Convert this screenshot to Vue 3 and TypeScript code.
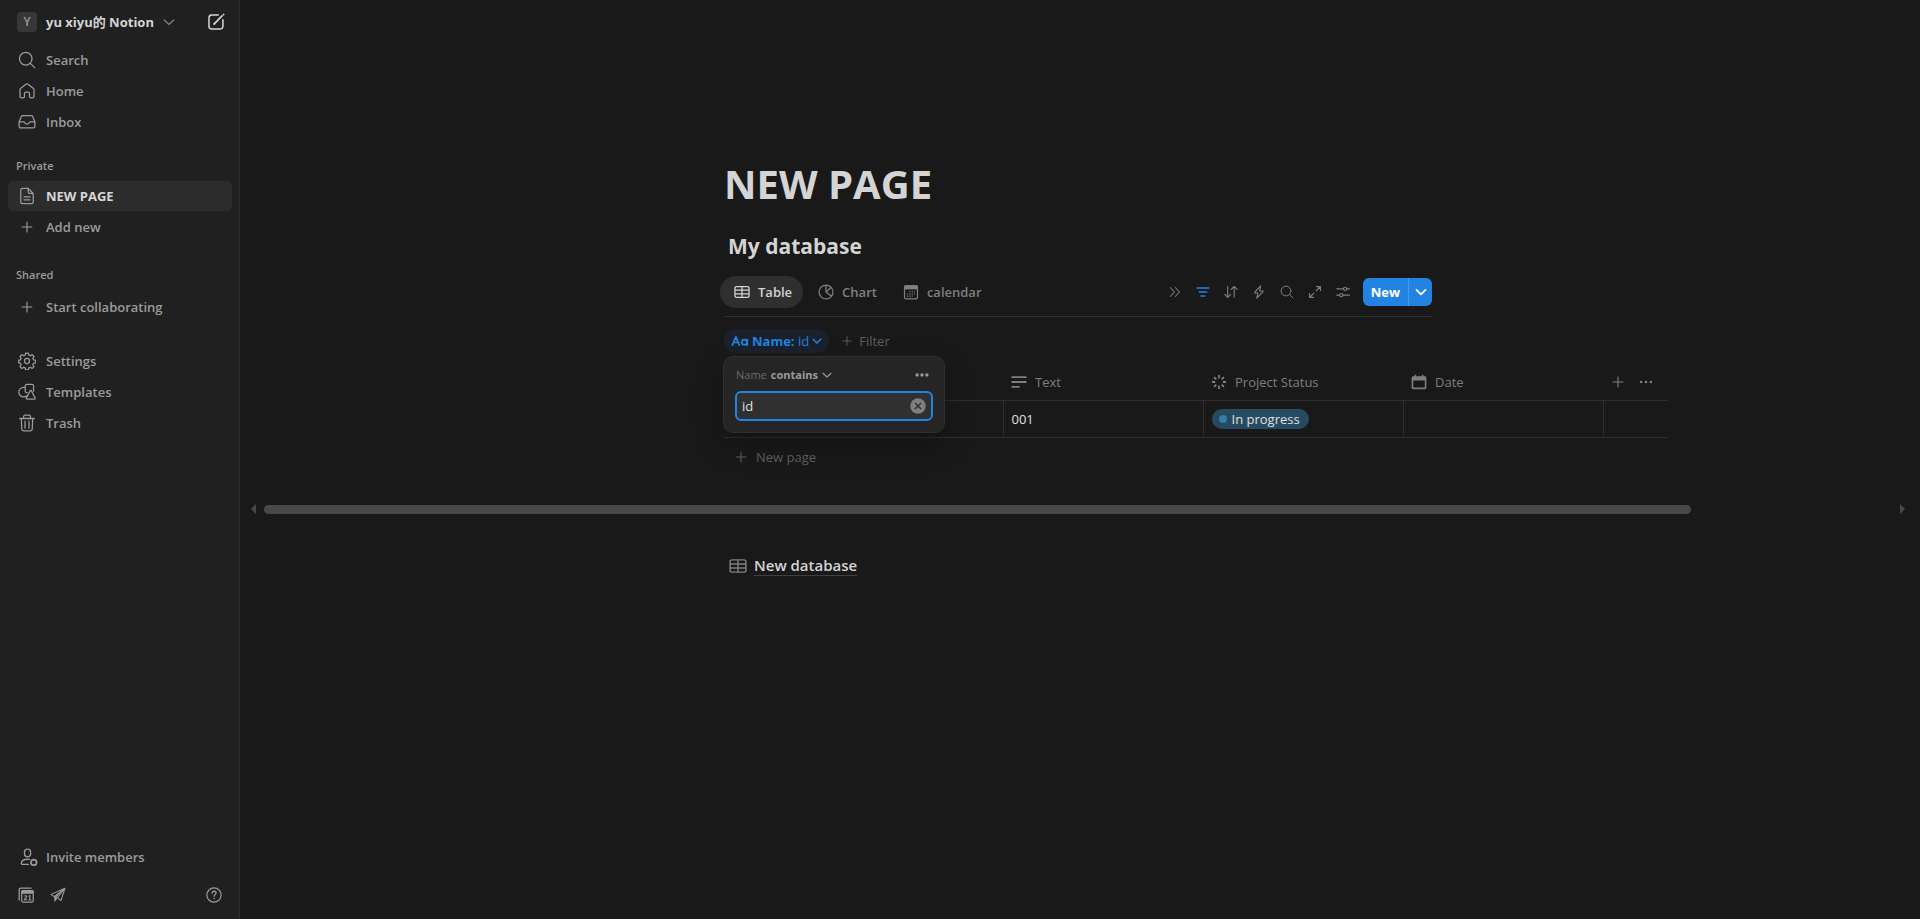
<script setup lang="ts">
import { ref } from 'vue'

interface NavItem {
  label: string
  icon: string
  active?: boolean
  muted?: boolean
}

const mainNav: NavItem[] = [
  { label: 'Search', icon: 'search' },
  { label: 'Home', icon: 'home' },
  { label: 'Inbox', icon: 'inbox' },
]
const privateNav: NavItem[] = [
  { label: 'NEW PAGE', icon: 'page', active: true },
  { label: 'Add new', icon: 'plus', muted: true },
]
const sharedNav: NavItem[] = [{ label: 'Start collaborating', icon: 'plus', muted: true }]
const systemNav: NavItem[] = [
  { label: 'Settings', icon: 'gear' },
  { label: 'Templates', icon: 'templates' },
  { label: 'Trash', icon: 'trash' },
]
const navGroups: { title: string; items: NavItem[] }[] = [
  { title: '', items: mainNav },
  { title: 'Private', items: privateNav },
  { title: 'Shared', items: sharedNav },
  { title: '', items: systemNav },
]

const views = [
  { label: 'Table', icon: 'table' },
  { label: 'Chart', icon: 'chart' },
  { label: 'calendar', icon: 'calendar-grid' },
]
const currentView = ref('Table')

const tools = [
  { label: 'Show more', icon: 'chevrons' },
  { label: 'Filter', icon: 'filter' },
  { label: 'Sort', icon: 'sort' },
  { label: 'Automations', icon: 'bolt' },
  { label: 'Search', icon: 'search' },
  { label: 'Open as full page', icon: 'expand' },
  { label: 'View settings', icon: 'sliders' },
]
const filterText = ref('id')
</script>

<template>
  <svg class="sprite" aria-hidden="true">
    <symbol id="search" viewBox="0 0 20 20"><g fill="none" stroke="currentColor" stroke-width="1.4" stroke-linecap="round"><circle cx="8.6" cy="8.6" r="7" /><path d="M13.7 13.7 18.5 18.5" /></g></symbol>
    <symbol id="home" viewBox="0 0 20 20"><path fill="none" stroke="currentColor" stroke-width="1.4" stroke-linejoin="round" d="M9.2 2.3a1.3 1.3 0 0 1 1.6 0l6.4 5c.4.3.6.7.6 1.2v7.3c0 1-.8 1.8-1.8 1.8h-1.6c-.9 0-1.6-.7-1.6-1.6v-3.2c0-.9-.7-1.6-1.6-1.6H8.8c-.9 0-1.6.7-1.6 1.6V16c0 .9-.7 1.6-1.6 1.6H4c-1 0-1.8-.8-1.8-1.8V8.500c0-.5.2-.9.6-1.200z" /></symbol>
    <symbol id="inbox" viewBox="0 0 20 20"><path fill="none" stroke="currentColor" stroke-width="1.4" stroke-linejoin="round" d="M1.2 9.8 3.6 4.2c.3-.7.9-1.2 1.7-1.2h9.400c.8 0 1.400.5 1.700 1.200l2.400 5.600v5c0 1-.8 1.800-1.800 1.800H3c-1 0-1.800-.8-1.800-1.800zH6.300c.6 0 1 .4 1.200.9a2.700 2.700 0 0 0 5 0c.2-.5.600-.9 1.200-.9h5.100" /></symbol>
    <symbol id="page" viewBox="0 0 20 20"><g fill="none" stroke="currentColor" stroke-width="1.4" stroke-linecap="round" stroke-linejoin="round"><path d="M11.400 1.600H5.200c-1.200 0-2.100.9-2.100 2.100v12.600c0 1.200.9 2.100 2.100 2.100h9.600c1.200 0 2.100-.9 2.100-2.100V7.100zV5.500c0 .9.700 1.600 1.600 1.600h3.900M6.700 11h6.600M6.700 14.200h6.600" /></g></symbol>
    <symbol id="plus" viewBox="0 0 20 20"><path stroke="currentColor" stroke-width="1.6" stroke-linecap="round" d="M10 3v14M3 10h14" /></symbol>
    <symbol id="gear" viewBox="0 0 20 20"><g fill="none" stroke="currentColor" stroke-width="1.400" stroke-linejoin="round"><circle cx="10" cy="10" r="2.800" /><path d="M8.500 1.200h3l.5 2.300 1.700.7 2-1.300 2.100 2.100-1.300 2 .7 1.700 2.300.4v2.900l-2.300.5-.7 1.700 1.300 2-2.100 2.100-2-1.300-1.700.7-.5 2.300h-3L8 17.700l-1.700-.7-2 1.300-2.100-2.100 1.300-2-.7-1.700L.8 12V9.100l2-.4.7-1.700-1.300-2 2.100-2.100 2 1.300L8 3.500z" /></g></symbol>
    <symbol id="templates" viewBox="0 0 20 20"><g fill="none" stroke="currentColor" stroke-width="1.400" stroke-linejoin="round"><path d="M7.600 5a5.300 5.300 0 1 0 2 9.200M8 9.500V3.200c0-.9.700-1.600 1.600-1.600h6.100c.9 0 1.600.7 1.600 1.600v6.500M8 9.200c0 1 .5 1.500 1.600 1.500h1.100M13.400 8.800c.4-.7 1.200-.7 1.600 0l4 7.700c.4.700 0 1.500-.8 1.500h-8c-.8 0-1.200-.8-.8-1.500z" /></g></symbol>
    <symbol id="trash" viewBox="0 0 20 20"><path fill="none" stroke="currentColor" stroke-width="1.400" stroke-linecap="round" stroke-linejoin="round" d="M1.900 5h16.200M6.200 4.800V3c0-1 .7-1.700 1.700-1.700h4.200c1 0 1.700.7 1.700 1.700v1.800M3.700 5.200l.5 11.600c0 1.100.8 1.900 1.900 1.900h7.800c1.100 0 1.900-.8 1.900-1.900l.5-11.600M7.800 8v7.700M12.200 8v7.700" /></symbol>
    <symbol id="compose" viewBox="0 0 20 20"><g fill="none" stroke="currentColor" stroke-linecap="round"><path stroke-width="1.700" d="M12.500 2.300H5.200a3 3 0 0 0-3 3v9.500a3 3 0 0 0 3 3h9.500a3 3 0 0 0 3-3V7.500" /><path stroke-width="1.900" d="m8.300 11.700 8.400-8.400M18.300 1.700l.2-.2" /></g><path fill="currentColor" d="m6.800 13.400.8-2.700 2 1.900z" /></symbol>
    <symbol id="down" viewBox="0 0 20 20"><path fill="none" stroke="currentColor" stroke-width="2.200" stroke-linecap="round" stroke-linejoin="round" d="m2 6.500 8 7.500 8-7.500" /></symbol>
    <symbol id="down-bold" viewBox="0 0 20 20"><path fill="none" stroke="currentColor" stroke-width="3" stroke-linecap="round" stroke-linejoin="round" d="m2.500 6.500 7.500 7.500 7.500-7.500" /></symbol>
    <symbol id="member" viewBox="0 0 20 20"><g fill="none" stroke="currentColor" stroke-width="1.500"><rect x="5" y="1.300" width="6.800" height="8.500" rx="3.400" /><path stroke-linecap="round" d="M9.500 18.200H2.600c-.8 0-1.300-.6-1.200-1.400.5-2.600 3.200-4.300 7-4.300.8 0 1.500 0 2.200.2" /><circle cx="15.300" cy="16" r="3.100" stroke-width="1.900" /></g></symbol>
    <symbol id="cal21" viewBox="0 0 20 20"><path fill="none" stroke="currentColor" stroke-width="1.600" d="M1.500 17V3.500c0-1.200.8-2 2-2H17" /><rect x="4.700" y="4.500" width="14.300" height="14.300" rx="1.500" fill="none" stroke="currentColor" stroke-width="1.500" /><path fill="currentColor" d="M4.200 4.200h15v4.300h-15z" /><path fill="none" stroke="currentColor" stroke-width="1.400" d="M8 11.700c.5-1.100 3-1 3 .3 0 1.500-3 2-3 4h3.400M13.200 11.500l1.600-.7V16m-1.800.3h3.600" /></symbol>
    <symbol id="send" viewBox="0 0 20 20"><path fill="none" stroke="currentColor" stroke-width="1.300" stroke-linejoin="round" d="M18.800 1.500 1.200 9.200l4.100 2.900L18.800 1.500 13.700 17l-4.300-3.600z" /><path fill="currentColor" d="m5 12 .8 6.600 3.600-4.400-1.200-1.400L15 5.200z" /></symbol>
    <symbol id="help" viewBox="0 0 20 20"><circle cx="10" cy="10" r="8.900" fill="none" stroke="currentColor" stroke-width="1.500" /><path fill="none" stroke="currentColor" stroke-width="1.600" stroke-linecap="round" d="M7.500 7.600c.2-1.500 1.200-2.300 2.600-2.300s2.500.9 2.500 2.200c0 2-2.500 2.100-2.500 4.200" /><circle cx="10.100" cy="14.300" r="1" fill="currentColor" /></symbol>
    <symbol id="table" viewBox="0 0 20 20"><path fill="none" stroke="currentColor" stroke-width="1.600" d="M3.200 3.200h13.600a2 2 0 0 1 2 2v9.600a2 2 0 0 1-2 2H3.200a2 2 0 0 1-2-2V5.200a2 2 0 0 1 2-2zM1.200 7.700h17.600M1.200 12.300h17.600M10 3v14" /></symbol>
    <symbol id="chart" viewBox="0 0 20 20"><g fill="none" stroke="currentColor" stroke-width="1.600" stroke-linejoin="round"><circle cx="10" cy="10" r="8.700" /><path d="M10 1.300V10l6.500 5M10 10l6.600-6" /></g></symbol>
    <symbol id="calendar-grid" viewBox="0 0 20 20"><rect x="1.900" y="2" width="16.200" height="16.500" rx="2" fill="none" stroke="currentColor" stroke-width="1.500" /><path fill="currentColor" d="M1.900 2h16.200v4.800H1.900z" /><path stroke="currentColor" stroke-width="1.500" stroke-dasharray="1.500 1.400" d="M8 9.700h7M5 12.500h10M5 15.200h7" /></symbol>
    <symbol id="chevrons" viewBox="0 0 20 20"><path fill="none" stroke="currentColor" stroke-width="1.700" stroke-linecap="round" stroke-linejoin="round" d="m2 2.500 7 7.500-7 7.500M10.500 2.500l7 7.500-7 7.500" /></symbol>
    <symbol id="filter" viewBox="0 0 20 20"><path stroke="currentColor" stroke-width="2" stroke-linecap="round" d="M1.500 4.200h17M4.500 10h11M7.300 15.800h5.400" /></symbol>
    <symbol id="sort" viewBox="0 0 20 20"><path fill="none" stroke="currentColor" stroke-width="1.600" stroke-linecap="round" stroke-linejoin="round" d="M5.300 2.200v15.300M1.200 13.500l4.100 4.200 4.100-4.200M14.500 17.500V2.200M10.400 6.300l4.100-4.200 4.300 4.200" /></symbol>
    <symbol id="bolt" viewBox="0 0 20 20"><path fill="none" stroke="currentColor" stroke-width="1.600" stroke-linejoin="round" d="M12.300 1.200 3.800 10.700c-.3.400-.1.800.4.800h4.300l-1.600 7.300 8.900-9.500c.3-.4.100-.8-.4-.8H11z" /></symbol>
    <symbol id="expand" viewBox="0 0 20 20"><path fill="none" stroke="currentColor" stroke-width="1.700" stroke-linecap="round" stroke-linejoin="round" d="M12.200 2.200h5.600v5.600M17.500 2.500l-6 6M7.800 17.800H2.200v-5.600M2.500 17.500l6-6" /></symbol>
    <symbol id="sliders" viewBox="0 0 20 20"><g fill="none" stroke="currentColor" stroke-width="1.600" stroke-linecap="round"><path d="M1 5.500h9.700M15.500 5.500H19M1 14.500h4.200M10 14.500h9" /><circle cx="13" cy="5.500" r="2.300" /><circle cx="7.500" cy="14.500" r="2.300" /></g></symbol>
    <symbol id="dots" viewBox="0 0 20 20"><g fill="currentColor"><circle cx="3" cy="10" r="2.400" /><circle cx="10" cy="10" r="2.400" /><circle cx="17" cy="10" r="2.400" /></g></symbol>
    <symbol id="dots-thin" viewBox="0 0 20 20"><g fill="currentColor"><circle cx="3" cy="10" r="1.900" /><circle cx="10" cy="10" r="1.900" /><circle cx="17" cy="10" r="1.900" /></g></symbol>
    <symbol id="clear" viewBox="0 0 20 20"><circle cx="10" cy="10" r="9.700" fill="#7f7f7f" /><path stroke="#303030" stroke-width="1.900" d="m6.200 6.200 7.600 7.600M13.800 6.200l-7.600 7.600" /></symbol>
    <symbol id="lines" viewBox="0 0 20 20"><path stroke="currentColor" stroke-width="2.200" stroke-linecap="round" d="M1.500 4h17M1.500 10h17M1.500 16h8.500" /></symbol>
    <symbol id="status" viewBox="0 0 20 20"><path stroke="currentColor" stroke-width="2.200" d="M10 1.200v4M10 14.800v4M1.200 10h4M14.800 10h4M3.800 3.800l2.800 2.800M13.400 13.400l2.800 2.800M3.800 16.200l2.800-2.800M13.400 6.600l2.800-2.800" /></symbol>
    <symbol id="date" viewBox="0 0 20 20"><path fill="currentColor" fill-rule="evenodd" d="M4.500.8h2v2h7v-2h2v2h1.700c1.200 0 2 .8 2 2V17c0 1.200-.8 2-2 2H2.800c-1.200 0-2-.8-2-2V4.800c0-1.200.8-2 2-2h1.700zM2.800 8v9h14.400V8z" /></symbol>
    <symbol id="aa" viewBox="0 0 24 16"><g fill="none" stroke="currentColor" stroke-width="2.300" stroke-linecap="round" stroke-linejoin="round"><path d="m1.800 13.500 4.700-11 4.700 11M3.400 10h6.200" /><circle cx="17.800" cy="9.800" r="3.500" /><path d="M21.700 6v7.500" /></g></symbol>
  </svg>

  <div class="shell">
    <aside class="sidebar">
      <header class="workspace">
        <button class="switcher">
          <span class="avatar">Y</span>
          <span>yu xiyu的 Notion</span>
          <svg class="i12"><use href="#down" /></svg>
        </button>
        <button class="compose" aria-label="New page"><svg class="i18"><use href="#compose" /></svg></button>
      </header>

      <nav class="nav">
        <section v-for="(group, index) in navGroups" :key="index" class="group">
          <h2 v-if="group.title">{{ group.title }}</h2>
          <a v-for="item in group.items" :key="item.label" href="#" class="nav-item" :class="{ active: item.active }">
            <span class="nav-icon"><svg :class="item.muted ? 'i14' : 'i18'"><use :href="'#' + item.icon" /></svg></span>
            {{ item.label }}
          </a>
        </section>
      </nav>

      <footer class="side-footer">
        <a href="#" class="nav-item">
          <span class="nav-icon member"><svg class="i18"><use href="#member" /></svg></span>
          Invite members
        </a>
        <div class="side-tools">
          <button aria-label="Calendar"><svg class="i16"><use href="#cal21" /></svg></button>
          <button aria-label="Mail"><svg class="i16"><use href="#send" /></svg></button>
          <button class="help" aria-label="Help"><svg class="i16"><use href="#help" /></svg></button>
        </div>
      </footer>
    </aside>

    <main class="main">
      <div class="column">
        <h1>NEW PAGE</h1>
        <h2 class="db-title">My database</h2>
        <div class="toolbar">
          <div class="tabs">
            <button
              v-for="view in views"
              :key="view.label"
              class="tab"
              :class="{ current: view.label === currentView }"
              @click="currentView = view.label"
            >
              <svg class="i16"><use :href="'#' + view.icon" /></svg>{{ view.label }}
            </button>
          </div>
          <div class="tools">
            <button v-for="tool in tools" :key="tool.label" class="tool" :class="tool.icon" :aria-label="tool.label">
              <svg><use :href="'#' + tool.icon" /></svg>
            </button>
          </div>
          <div class="new">
            <button class="new-main">New</button>
            <button class="new-more" aria-label="New options"><svg class="i12"><use href="#down-bold" /></svg></button>
          </div>
        </div>

        <div class="filters">
          <div class="filter-anchor">
            <button class="chip">
              <svg class="aa"><use href="#aa" /></svg>
              <span><b>Name:</b> id</span>
              <svg class="i10"><use href="#down-bold" /></svg>
            </button>
            <div class="popover">
              <div class="popover-head">
                <label for="filter-value">Name</label>
                <button class="operator">contains <svg class="i10"><use href="#down" /></svg></button>
                <button class="more" aria-label="Filter options"><svg class="i14"><use href="#dots" /></svg></button>
              </div>
              <div class="field">
                <input id="filter-value" v-model="filterText" type="text" />
                <button aria-label="Clear" @click="filterText = ''"><svg class="i16"><use href="#clear" /></svg></button>
              </div>
            </div>
          </div>
          <button class="add-filter"><svg class="i12"><use href="#plus" /></svg>Filter</button>
        </div>
      </div>

      <div class="bleed">
        <table>
          <colgroup><col class="c-name" /><col class="c" /><col class="c" /><col class="c" /><col class="c-end" /></colgroup>
          <thead>
            <tr>
              <th aria-label="Name"></th>
              <th><span class="th"><svg class="i16"><use href="#lines" /></svg>Text</span></th>
              <th><span class="th"><svg class="i16"><use href="#status" /></svg>Project Status</span></th>
              <th><span class="th"><svg class="i16"><use href="#date" /></svg>Date</span></th>
              <th>
                <span class="th end">
                  <button aria-label="Add property"><svg class="i14"><use href="#plus" /></svg></button>
                  <button aria-label="More"><svg class="i14"><use href="#dots-thin" /></svg></button>
                </span>
              </th>
            </tr>
          </thead>
          <tbody>
            <tr>
              <td></td>
              <td>001</td>
              <td><span class="status">In progress</span></td>
              <td></td>
              <td></td>
            </tr>
          </tbody>
        </table>
        <button class="new-row"><svg class="i14"><use href="#plus" /></svg>New page</button>
      </div>

      <div class="scrollbar" aria-hidden="true">
        <span class="arrow left"></span>
        <span class="track"><span class="thumb"></span></span>
        <span class="arrow right"></span>
      </div>

      <div class="column">
        <a href="#" class="link-db"><svg class="i18"><use href="#table" /></svg><span>New database</span></a>
      </div>
    </main>
  </div>
</template>

<style>
html,
body {
  background: #191919;
}
</style>

<style scoped>
* {
  box-sizing: border-box;
}
.sprite {
  position: absolute;
  width: 0;
  height: 0;
}
.shell {
  display: flex;
  min-height: 100vh;
  background: #191919;
  color: #d4d4d4;
  font: 13px/20px "Segoe UI", "Open Sans", "Noto Sans CJK SC", sans-serif;
}
svg {
  display: block;
  flex: none;
}
.i10 { width: 10px; height: 10px; }
.i12 { width: 12px; height: 12px; }
.i14 { width: 14px; height: 14px; }
.i16 { width: 16px; height: 16px; }
.i18 { width: 18px; height: 18px; }
button {
  display: flex;
  align-items: center;
  justify-content: center;
  padding: 0;
  border: 0;
  background: none;
  color: inherit;
  font: inherit;
  cursor: pointer;
}
a {
  color: inherit;
  text-decoration: none;
}
h1,
h2 {
  margin: 0;
}

.sidebar {
  display: flex;
  flex-direction: column;
  flex: none;
  width: 240px;
  padding: 7px 7px 10px 8px;
  border-right: 1px solid #2b2b2b;
  background: #202020;
  color: #9b9b9b;
}
.workspace {
  display: flex;
  justify-content: space-between;
  height: 30px;
  padding: 0 7px 0 9px;
  color: #d4d4d4;
  font-weight: 700;
}
.switcher {
  gap: 9px;
}
.switcher svg {
  color: #7d7d7d;
}
.avatar {
  width: 20px;
  height: 20px;
  border-radius: 4px;
  background: #373737;
  color: #9b9b9b;
  font-size: 12px;
  font-weight: 600;
}
.nav {
  flex: 1;
  padding-top: 8px;
}
.group {
  display: flex;
  flex-direction: column;
  gap: 1px;
  margin-bottom: 18px;
}
.group:nth-child(2) {
  margin-bottom: 22px;
}
.group:nth-child(3) {
  margin-bottom: 24px;
}
.group h2 {
  height: 24px;
  padding-left: 8px;
  margin-bottom: 1px;
  font-size: 11px;
  font-weight: 600;
  line-height: 22px;
}
.group:nth-child(3) h2 {
  margin-bottom: 3px;
}
.nav-item {
  display: flex;
  align-items: center;
  gap: 8px;
  height: 30px;
  padding: 0 8px;
  border-radius: 6px;
  font-weight: 600;
}
.nav-item.active {
  background: #2c2c2c;
  color: #d8d8d8;
  font-weight: 700;
}
.nav-icon {
  display: flex;
  align-items: center;
  justify-content: center;
  width: 22px;
  height: 22px;
  color: #9b9b9b;
}
.nav-icon.member {
  justify-content: flex-end;
}
.side-tools {
  display: flex;
  align-items: center;
  gap: 16px;
  height: 28px;
  margin-top: 9px;
  padding: 0 10px;
}
.help {
  margin-left: auto;
}

.main {
  flex: 1;
  min-width: 0;
  padding: 160px 4px 0 0;
}
.column {
  width: 708px;
  margin: 0 auto;
}
h1 {
  color: #d4d4d4;
  font-size: 40px;
  font-weight: 700;
  line-height: 48px;
}
.db-title {
  margin-top: 22px;
  padding-left: 4px;
  font-size: 21px;
  font-weight: 700;
  line-height: 32px;
}
.toolbar {
  display: flex;
  align-items: center;
  height: 55px;
  padding-top: 5px;
  border-bottom: 1px solid #2f2f2f;
}
.tabs {
  display: flex;
  gap: 1px;
  margin-left: -4px;
}
.tab {
  gap: 8px;
  height: 32px;
  padding: 0 11px 0 14px;
  border-radius: 16px;
  color: #7f7f7f;
  font-weight: 600;
}
.tab.current {
  background: #2f2f2f;
  color: #d4d4d4;
}
.tools {
  display: flex;
  margin-left: auto;
  color: #7f7f7f;
}
.tool {
  width: 28px;
  height: 28px;
}
.tool svg {
  width: 14px;
  height: 14px;
}
.tool.chevrons svg {
  width: 12px;
  height: 12px;
}
.tool.filter {
  color: #2383e2;
}
.new {
  display: flex;
  height: 28px;
  margin-left: 6px;
  border-radius: 6px;
  background: #2383e2;
  color: #fff;
}
.new-main {
  width: 46px;
  border-right: 1px solid #4997e6;
  font-weight: 700;
}
.new-more {
  width: 23px;
}
.filters {
  display: flex;
  align-items: center;
  gap: 12px;
  height: 48px;
}
.filter-anchor {
  position: relative;
}
.chip {
  gap: 3px;
  height: 24px;
  padding: 0 7px;
  border-radius: 12px;
  background: #1a212a;
  color: #2383e2;
}
.chip b {
  font-weight: 700;
}
.aa {
  width: 18px;
  height: 12px;
}
.add-filter {
  gap: 6px;
  color: #5f5f5f;
}
.popover {
  position: absolute;
  z-index: 2;
  top: 27px;
  left: -1px;
  width: 222px;
  padding: 8px 11px 11px;
  border: 1px solid #303030;
  border-radius: 10px;
  background: #252525;
  box-shadow: 0 12px 28px rgba(0, 0, 0, 0.25);
}
.popover-head {
  display: flex;
  align-items: center;
  gap: 4px;
  height: 20px;
  margin-bottom: 6px;
  padding: 0 4px 0 1px;
  color: #6b6b6b;
  font-size: 11px;
}
.operator {
  gap: 4px;
  color: #9b9b9b;
  font-weight: 700;
}
.more {
  margin-left: auto;
  color: #9b9b9b;
}
.field {
  display: flex;
  align-items: center;
  height: 30px;
  padding: 0 5px;
  border: 2px solid #2383e2;
  border-radius: 6px;
  background: #303030;
}
.field input {
  flex: 1;
  min-width: 0;
  padding: 0;
  border: 0;
  outline: 0;
  background: none;
  color: #e0e0e0;
  font: inherit;
}

.bleed {
  padding-left: calc(50% - 354px);
}
table {
  width: 944px;
  table-layout: fixed;
  border-collapse: collapse;
}
.c-name { width: 279px; }
.c { width: 200px; }
.c-end { width: 65px; }
th {
  height: 35px;
  padding: 0 8px;
  border-bottom: 1px solid #2f2f2f;
  color: #7f7f7f;
  font-weight: 400;
  text-align: left;
}
.th {
  display: flex;
  align-items: center;
  gap: 8px;
}
.th.end {
  gap: 14px;
}
td {
  height: 37px;
  padding: 0 8px;
  border-right: 1px solid #2f2f2f;
  border-bottom: 1px solid #2f2f2f;
  color: #e0e0e0;
}
td:last-child {
  border-right: 0;
}
.status {
  display: inline-flex;
  align-items: center;
  gap: 5px;
  height: 20px;
  padding: 0 9px 0 7px;
  border-radius: 10px;
  background: #264a60;
}
.status::before {
  width: 8px;
  height: 8px;
  border-radius: 50%;
  background: #337ea9;
  content: "";
}
.new-row {
  gap: 8px;
  height: 38px;
  padding-left: 10px;
  color: #5f5f5f;
}
.scrollbar {
  display: flex;
  align-items: center;
  gap: 8px;
  height: 9px;
  margin: 29px 11px 0 11px;
}
.arrow {
  border: 5px solid transparent;
  border-width: 5px 0;
}
.arrow.left {
  border-right: 5px solid #484848;
}
.arrow.right {
  border-left: 5px solid #484848;
}
.track {
  flex: 1;
}
.thumb {
  display: block;
  width: 87.65%;
  height: 9px;
  border-radius: 5px;
  background: #484848;
}
.link-db {
  display: flex;
  align-items: center;
  gap: 7px;
  height: 30px;
  margin-top: 37px;
  padding-left: 5px;
  color: #d4d4d4;
  font-size: 15px;
  font-weight: 600;
}
.link-db svg {
  color: #7f7f7f;
}
.link-db span {
  border-bottom: 1px solid #404040;
}
</style>
